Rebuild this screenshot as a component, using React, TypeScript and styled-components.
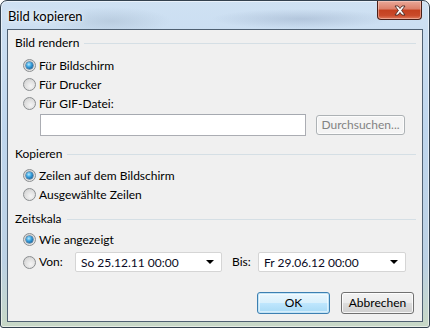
import React from "react";
import styled, { createGlobalStyle, css } from "styled-components";

const GlobalStyle = createGlobalStyle`
  html, body {
    margin: 0;
    padding: 0;
    background: #ffffff;
  }
  body {
    font-family: Lato, "Noto Sans", "DejaVu Sans", sans-serif;
    font-size: 12px;
    color: #000;
  }
`;

const Window = styled.div`
  box-sizing: border-box;
  width: 430px;
  height: 328px;
  border: 1px solid #33414f;
  border-radius: 7px 7px 3px 3px;
  display: flex;
  flex-direction: column;
  overflow: hidden;
  background:
    radial-gradient(ellipse 60px 14px at 110px 20px, rgba(150, 170, 190, 0.35), transparent),
    radial-gradient(ellipse 90px 10px at 300px 18px, rgba(120, 140, 170, 0.3), transparent),
    linear-gradient(to bottom, #cfe1f3 0%, #bfd6ed 40%, #bcd1e4 80%, #c8d8c6 100%);
  box-shadow: inset 0 0 0 1px rgba(255, 255, 255, 0.55);
`;

const TitleBar = styled.div`
  height: 28px;
  display: flex;
  align-items: flex-start;
  justify-content: space-between;
  padding-left: 7px;
  padding-right: 7px;
`;

const Title = styled.span`
  font-size: 13px;
  line-height: 16px;
  margin-top: 7px;
  color: #000;
  text-shadow: 0 0 8px rgba(255, 255, 255, 0.9), 0 0 3px rgba(255, 255, 255, 0.9);
`;

const CloseButton = styled.div`
  width: 43px;
  height: 18px;
  border: 1px solid #4a1f18;
  border-top: none;
  border-radius: 0 0 4px 4px;
  display: flex;
  align-items: center;
  justify-content: center;
  background: linear-gradient(
    to bottom,
    #e9a898 0%,
    #dc7f69 45%,
    #c4401f 50%,
    #c94a2a 80%,
    #e07a5c 100%
  );
  box-shadow: inset 0 0 0 1px rgba(255, 220, 210, 0.45);
`;

const Client = styled.div`
  box-sizing: border-box;
  margin: 0 6px 0 6px;
  height: 293px;
  border: 1px solid #4f6072;
  background: #f0f0f0;
  display: flex;
  flex-direction: column;
  padding: 5px 6px 0 7px;
`;

const GroupHeader = styled.div<{ $gap: number }>`
  display: flex;
  align-items: center;
  height: 16px;
  margin-top: ${(p) => p.$gap}px;
`;

const HeaderText = styled.span`
  line-height: 16px;
  white-space: nowrap;
`;

const HeaderLine = styled.div`
  flex: 1;
  height: 1px;
  margin-left: 5px;
  background: #d5dfe5;
`;

const OptionRow = styled.div<{ $gap?: number }>`
  display: flex;
  align-items: center;
  height: 19px;
  padding-left: 8px;
  margin-top: ${(p) => p.$gap ?? 0}px;
`;

const RadioCircle = styled.span<{ $checked?: boolean }>`
  box-sizing: border-box;
  width: 13px;
  height: 13px;
  border-radius: 50%;
  border: 1px solid #8b8e90;
  background: radial-gradient(circle at 60% 65%, #f5f5f5 0%, #dcdcdc 60%, #c9c9c9 100%);
  display: flex;
  align-items: center;
  justify-content: center;
  flex-shrink: 0;
  ${(p) =>
    p.$checked &&
    css`
      &::after {
        content: "";
        width: 7px;
        height: 7px;
        border-radius: 50%;
        background: radial-gradient(circle at 40% 35%, #b6ebff 0%, #3aa3e0 40%, #13609b 80%, #0d4674 100%);
        box-shadow: 0 0 0 0.5px #1b4f7a;
      }
    `}
`;

const Label = styled.span`
  margin-left: 3px;
  line-height: 16px;
  white-space: nowrap;
`;

const FileRow = styled.div`
  display: flex;
  align-items: center;
  height: 22px;
  margin-top: 1px;
  padding-left: 25px;
`;

const TextInput = styled.div`
  box-sizing: border-box;
  width: 266px;
  height: 22px;
  background: #fff;
  border: 1px solid #abadb3;
  border-top-color: #a5a9b0;
`;

const Button = styled.div<{ $width: number; $variant?: "default" | "disabled" }>`
  box-sizing: border-box;
  width: ${(p) => p.$width}px;
  height: 22px;
  border: 1px solid #707070;
  border-radius: 3px;
  display: flex;
  align-items: center;
  justify-content: center;
  line-height: 16px;
  color: #000;
  background: linear-gradient(to bottom, #f2f2f2 0%, #ebebeb 48%, #dddddd 52%, #cfcfcf 100%);
  box-shadow: inset 0 0 0 1px rgba(255, 255, 255, 0.8);
  ${(p) =>
    p.$variant === "default" &&
    css`
      border-color: #3c7fb1;
      background: linear-gradient(to bottom, #eaf6fd 0%, #d9f0fc 48%, #bee6fd 52%, #a7d9f5 100%);
      box-shadow: inset 0 0 0 1px #c2e4f6, inset 0 0 0 2px rgba(255, 255, 255, 0.5);
    `}
  ${(p) =>
    p.$variant === "disabled" &&
    css`
      height: 20px;
      border-color: #adb2b5;
      color: #838383;
      background: #f4f4f4;
      box-shadow: inset 0 0 0 1px #fcfcfc;
    `}
`;

const BrowseSlot = styled.div`
  margin-left: 10px;
`;

const RangeRow = styled.div`
  display: flex;
  align-items: center;
  height: 20px;
  margin-top: 3px;
  padding-left: 8px;
`;

const RangeLabel = styled.span<{ $width: number; $indent?: number }>`
  width: ${(p) => p.$width}px;
  line-height: 16px;
  margin-left: ${(p) => p.$indent ?? 0}px;
`;

const Select = styled.div<{ $width: number }>`
  box-sizing: border-box;
  width: ${(p) => p.$width}px;
  height: 20px;
  border: 1px solid #d5d5d5;
  border-radius: 2px;
  background: #fff;
  display: flex;
  align-items: center;
  justify-content: space-between;
  padding: 0 7px 0 5px;
  color: #0a0a24;
`;

const Arrow = styled.span`
  width: 0;
  height: 0;
  border-left: 4px solid transparent;
  border-right: 4px solid transparent;
  border-top: 4px solid #000;
`;

const BisSlot = styled.div`
  display: flex;
  align-items: center;
  margin-left: 10px;
`;

const Footer = styled.div`
  margin-top: auto;
  margin-bottom: 7px;
  display: flex;
  justify-content: flex-end;
  gap: 11px;
  padding-right: 2px;
`;

const CloseGlyph = () => (
  <svg width="14" height="11" viewBox="0 0 14 11">
    <path
      d="M2 1 L5 1 L7 3.5 L9 1 L12 1 L8.6 5.5 L12 10 L9 10 L7 7.5 L5 10 L2 10 L5.4 5.5 Z"
      fill="#ffffff"
      stroke="#4a2a25"
      strokeWidth="0.9"
      strokeLinejoin="round"
    />
  </svg>
);

const Radio = ({ checked, label, gap }: { checked?: boolean; label: string; gap?: number }) => (
  <OptionRow $gap={gap}>
    <RadioCircle $checked={checked} />
    <Label>{label}</Label>
  </OptionRow>
);

export default function App() {
  return (
    <>
      <GlobalStyle />
      <Window>
        <TitleBar>
          <Title>Bild kopieren</Title>
          <CloseButton>
            <CloseGlyph />
          </CloseButton>
        </TitleBar>
        <Client>
          <GroupHeader $gap={0}>
            <HeaderText>Bild rendern</HeaderText>
            <HeaderLine />
          </GroupHeader>
          <Radio checked label="Für Bildschirm" gap={5} />
          <Radio label="Für Drucker" />
          <Radio label="Für GIF-Datei:" />
          <FileRow>
            <TextInput />
            <BrowseSlot>
              <Button $width={89} $variant="disabled">
                Durchsuchen...
              </Button>
            </BrowseSlot>
          </FileRow>

          <GroupHeader $gap={10}>
            <HeaderText>Kopieren</HeaderText>
            <HeaderLine />
          </GroupHeader>
          <Radio checked label="Zeilen auf dem Bildschirm" gap={4} />
          <Radio label="Ausgewählte Zeilen" />

          <GroupHeader $gap={7}>
            <HeaderText>Zeitskala</HeaderText>
            <HeaderLine />
          </GroupHeader>
          <Radio checked label="Wie angezeigt" gap={3} />
          <RangeRow>
            <RadioCircle />
            <RangeLabel $width={36} $indent={3}>
              Von:
            </RangeLabel>
            <Select $width={147}>
              <span>So 25.12.11 00:00</span>
              <Arrow />
            </Select>
            <BisSlot>
              <RangeLabel $width={26}>Bis:</RangeLabel>
              <Select $width={148}>
                <span>Fr 29.06.12 00:00</span>
                <Arrow />
              </Select>
            </BisSlot>
          </RangeRow>

          <Footer>
            <Button $width={73} $variant="default">
              OK
            </Button>
            <Button $width={73}>Abbrechen</Button>
          </Footer>
        </Client>
      </Window>
    </>
  );
}
